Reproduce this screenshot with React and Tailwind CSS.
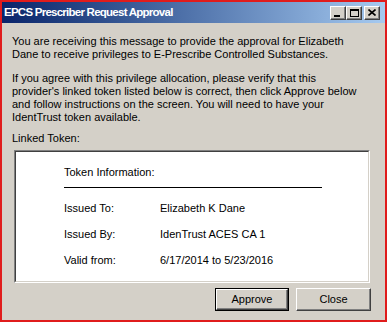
const font = { fontFamily: '"Liberation Sans", Arial, sans-serif' }

const TitleButton = ({ children }) => (
  <div className="w-[16px] h-[14px] bg-[#d4d0c8] border border-t-white border-l-white border-r-[#404040] border-b-[#404040] flex items-center justify-center shadow-[inset_-1px_-1px_0_#808080]">
    {children}
  </div>
)

const Button = ({ label, isDefault }) => (
  <div className={isDefault ? "w-[74px] h-[23px] border border-black" : "w-[75px] h-[23px]"}>
    <div className="w-full h-full bg-[#d4d0c8] border border-t-white border-l-white border-r-[#404040] border-b-[#404040] shadow-[inset_-1px_-1px_0_#808080] flex items-center justify-center text-[11px] text-black">
      {label}
    </div>
  </div>
)

const Row = ({ label, value }) => (
  <div className="flex h-[26px] items-center">
    <div className="w-[96px]">{label}</div>
    <div>{value}</div>
  </div>
)

export default function App() {
  return (
    <div className="w-[387px] h-[322px] border-2 border-[#e01c1c] bg-[#d4d0c8] flex flex-col text-black" style={font}>
      {/* title bar */}
      <div className="h-[21px] bg-gradient-to-r from-[#0a246a] to-[#a6caf0] flex items-center justify-between pl-[2px] pr-[5px]">
        <span className="text-white font-bold text-[11.5px] tracking-[-0.75px]">EPCS Prescriber Request Approval</span>
        <div className="flex items-center">
          <TitleButton>
            <div className="w-[6px] h-[2px] bg-black mt-[6px] mr-[2px]"></div>
          </TitleButton>
          <TitleButton>
            <div className="w-[9px] h-[8px] border border-black border-t-2"></div>
          </TitleButton>
          <div className="ml-[2px]">
            <TitleButton>
              <svg width="8" height="7" viewBox="0 0 8 7">
                <path d="M0.5 0.5 L7.5 6.5 M7.5 0.5 L0.5 6.5" stroke="black" strokeWidth="1.6" />
              </svg>
            </TitleButton>
          </div>
        </div>
      </div>

      {/* message */}
      <div className="px-[10px] text-[11px] leading-[13px]">
        <p className="mt-[12px]">
          You are receiving this message to provide the approval for Elizabeth<br />
          Dane to receive privileges to E-Prescribe Controlled Substances.
        </p>
        <p className="mt-[11px]">
          If you agree with this privilege allocation, please verify that this<br />
          provider's linked token listed below is correct, then click Approve below<br />
          and follow instructions on the screen. You will need to have your<br />
          IdentTrust token available.
        </p>
        <p className="mt-[8px]">Linked Token:</p>
      </div>

      {/* token box */}
      <div className="ml-[12px] mt-[5px] w-[356px] h-[133px] border border-t-[#808080] border-l-[#808080] border-r-white border-b-white">
        <div className="w-full h-full bg-white border border-t-[#404040] border-l-[#404040] border-r-[#d4d0c8] border-b-[#d4d0c8] pl-[48px] text-[11px]">
          <div className="mt-[14px] h-[13px] leading-[13px]">Token Information:</div>
          <div className="mt-[8px] w-[258px] h-[1px] bg-black"></div>
          <div className="mt-[7px]">
            <Row label="Issued To:" value="Elizabeth K Dane" />
            <Row label="Issued By:" value="IdenTrust ACES CA 1" />
            <Row label="Valid from:" value="6/17/2014 to 5/23/2016" />
          </div>
        </div>
      </div>

      {/* buttons */}
      <div className="flex justify-end gap-[7px] pr-[14px] mt-[5px]">
        <Button label="Approve" isDefault />
        <Button label="Close" />
      </div>
    </div>
  )
}
